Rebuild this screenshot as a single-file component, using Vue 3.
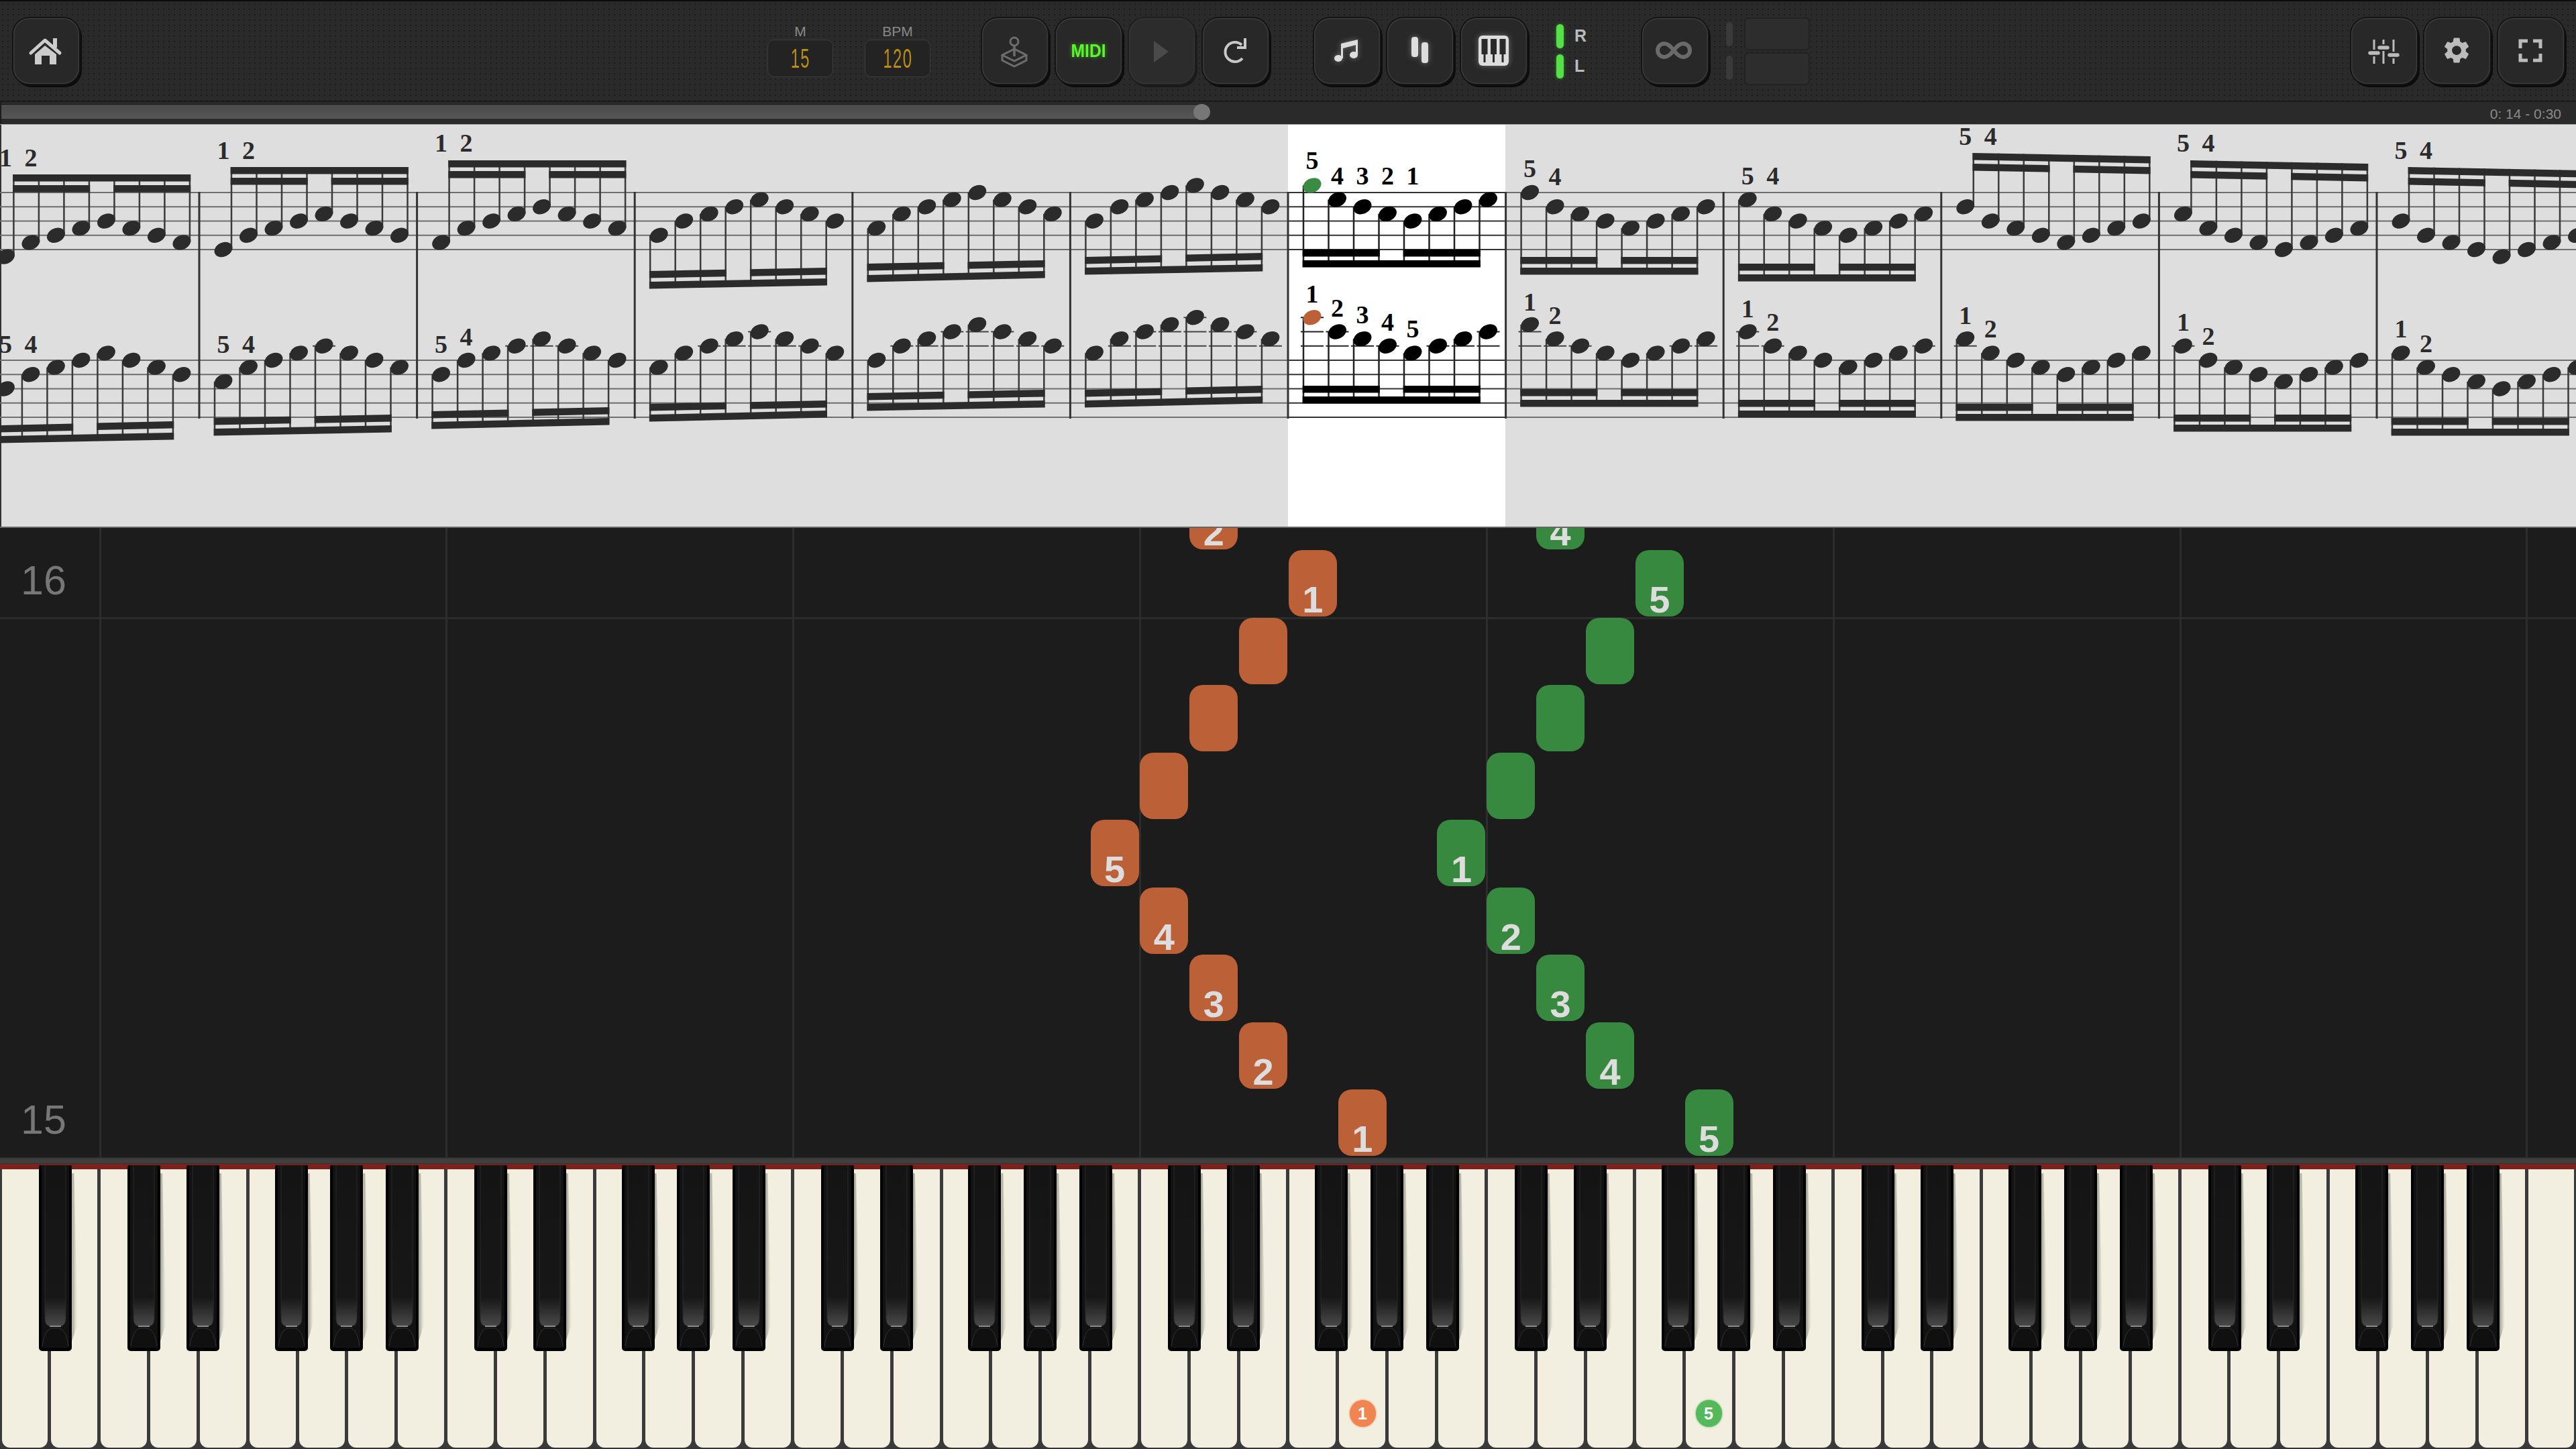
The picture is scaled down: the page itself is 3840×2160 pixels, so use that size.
<template>
  <div class="app">
    <!-- top toolbar -->
    <header class="topbar">
      <button class="btn home">
        <svg class="ico" viewBox="0 0 98 98">
          <rect x="59" y="30" width="6" height="14" fill="#ccc" />
          <path d="M26 52 47 33 69 52" fill="none" stroke="#ccc" stroke-width="5" stroke-linecap="round" stroke-linejoin="round" />
          <path d="M47 41 32 54V69H42V56H54V69H64V54Z" fill="#ccc" />
        </svg>
      </button>

      <div class="readout first">
        <span class="readout-label">M</span>
        <div class="lcd"><span>15</span></div>
      </div>
      <div class="readout second">
        <span class="readout-label">BPM</span>
        <div class="lcd"><span>120</span></div>
      </div>

      <div class="btn-group transport">
        <button class="btn">
          <svg class="ico" viewBox="0 0 98 98" fill="none" stroke="#6d6d6d" stroke-width="3" stroke-linejoin="round">
            <circle cx="48" cy="35" r="6" />
            <path d="M48 41V57" stroke-width="3.5" />
            <path d="M30 55 48 46 66 55 48 64Z" />
            <path d="M30 55V63L48 72 66 63V55" />
          </svg>
        </button>
        <button class="btn"><span class="midi">MIDI</span></button>
        <button class="btn disabled">
          <svg class="ico" viewBox="0 0 98 98"><path d="M37 34 59 50 37 66Z" fill="#4a4a4a" /></svg>
        </button>
        <button class="btn">
          <svg class="ico" viewBox="0 0 98 98" fill="none" stroke="#c8c8c8" stroke-width="4">
            <path d="M58 40A14.5 14.5 0 1 0 59 60" />
            <path d="M63 30V44H51" />
          </svg>
        </button>
      </div>

      <div class="btn-group views">
        <button class="btn">
          <svg class="ico lit" viewBox="0 0 98 98" fill="#ddd">
            <ellipse cx="36" cy="60" rx="6" ry="5" />
            <ellipse cx="59" cy="55" rx="6" ry="5" />
            <path d="M40 60V38L65 32V55H62V40L43 45V60Z" />
          </svg>
        </button>
        <button class="btn">
          <svg class="ico lit" viewBox="0 0 98 98" fill="#ddd">
            <rect x="36" y="28" width="10" height="30" rx="4" />
            <rect x="51" y="36" width="10" height="31" rx="4" />
          </svg>
        </button>
        <button class="btn">
          <svg class="ico lit" viewBox="0 0 98 98">
            <rect x="26" y="26" width="45" height="45" rx="6" fill="#ddd" />
            <path d="M30.5 31H39.500V54H36.500V66H33.500V54H30.500ZM44 31H53V54H50V66H47V54H44ZM57.500 31H66.500V54H63.500V66H60.500V54H57.500Z" fill="#2a2a2a" />
          </svg>
        </button>
      </div>

      <div class="hands">
        <div class="hand"><i class="led"></i><span>R</span></div>
        <div class="hand"><i class="led"></i><span>L</span></div>
      </div>

      <button class="btn loop">
        <svg class="ico" viewBox="0 0 98 98">
          <path d="M47 48C41 40 36 38 33 38A10 10 0 0 0 33 58C36 58 41 56 47 48S58 38 61 38A10 10 0 0 1 61 58C58 58 53 56 47 48Z" fill="none" stroke="#6a6a6a" stroke-width="6" />
        </svg>
      </button>

      <div class="slots"><i></i><i></i></div>
      <div class="loop-fields"><i></i><i></i></div>

      <div class="btn-group right">
        <button class="btn">
          <svg class="ico" viewBox="0 0 98 98" stroke="#bbb" stroke-width="3">
            <path d="M34 32V47M34 57V68M48 32V39M48 49V68M63 32V50M63 60V68" fill="none" />
            <path d="M28 52H40M42 44H54M57 55H69" stroke-width="5.5" stroke-linecap="round" fill="none" />
          </svg>
        </button>
        <button class="btn">
          <svg class="ico" viewBox="0 0 98 98">
            <g transform="translate(25 25)">
              <path transform="scale(1.92)" fill="#bbb" d="M19.14 12.94c.04-.3.06-.61.06-.94 0-.32-.02-.64-.07-.94l2.03-1.58a.49.49 0 0 0 .12-.61l-1.92-3.32a.488.488 0 0 0-.59-.22l-2.39.96c-.5-.38-1.03-.7-1.62-.94l-.36-2.54a.484.484 0 0 0-.48-.41h-3.84c-.24 0-.43.17-.47.41l-.36 2.54c-.59.24-1.13.57-1.62.94l-2.39-.96c-.22-.08-.47 0-.59.22L2.74 8.87c-.12.21-.08.47.12.61l2.03 1.58c-.05.3-.09.63-.09.94s.02.64.07.94l-2.03 1.58a.49.49 0 0 0-.12.61l1.92 3.32c.12.22.37.29.59.22l2.39-.96c.5.38 1.03.7 1.62.94l.36 2.54c.05.24.24.41.48.41h3.84c.24 0 .44-.17.47-.41l.36-2.54c.59-.24 1.13-.56 1.62-.94l2.39.96c.22.08.47 0 .59-.22l1.92-3.32c.12-.22.07-.47-.12-.61l-2.01-1.58zM12 15.6c-1.98 0-3.6-1.62-3.6-3.6s1.62-3.6 3.6-3.6 3.6 1.62 3.6 3.6-1.62 3.6-3.6 3.6z" />
            </g>
          </svg>
        </button>
        <button class="btn">
          <svg class="ico" viewBox="0 0 98 98" fill="none" stroke="#bbb" stroke-width="5">
            <path d="M33 45V34H44M52 34H63V45M63 53V63H52M44 63H33V53" />
          </svg>
        </button>
      </div>
    </header>

    <!-- progress -->
    <div class="progress">
      <div class="progress-fill"><i class="progress-thumb"></i></div>
      <span class="progress-time">0: 14 - 0:30</span>
    </div>

    <!-- score strip -->
    <section class="sheet">
      <svg class="score" width="3840" height="602" viewBox="0 185 3840 602">
        <rect x="1920" y="185" width="324" height="602" fill="#fff" />
        <line v-for="(l, i) in score.lines" :key="'l' + i" :x1="l.x1" :x2="l.x2" :y1="l.y" :y2="l.y" :stroke="l.color" stroke-width="2" />
        <line v-for="(b, i) in score.bars" :key="'b' + i" :x1="b" :x2="b" y1="286" y2="624" stroke="#333" stroke-width="3" />
        <line v-for="(s, i) in score.stems" :key="'s' + i" :x1="s.x" :x2="s.x" :y1="s.y1" :y2="s.y2" :stroke="s.color" stroke-width="2.5" />
        <polygon v-for="(p, i) in score.beams" :key="'p' + i" :points="p.points" :fill="p.color" />
        <ellipse v-for="(h, i) in score.heads" :key="'h' + i" :cx="h.x" :cy="h.y" rx="14" ry="10.5" :fill="h.color" :transform="`rotate(-25 ${h.x} ${h.y})`" />
        <text v-for="(t, i) in score.digits" :key="'t' + i" class="finger" :x="t.x" :y="t.y + 12.5" :fill="t.color">{{ t.n }}</text>
      </svg>
    </section>

    <!-- falling notes -->
    <section class="roll">
      <i v-for="x in gridX" :key="x" class="grid-v" :style="{ left: x + 'px' }"></i>
      <i class="grid-h"></i>
      <span class="bar-no no16">16</span>
      <span class="bar-no no15">15</span>
      <div
        v-for="(n, i) in rollNotes"
        :key="i"
        class="note"
        :class="n.hand"
        :style="{ left: n.left + 'px', top: n.top + 'px' }"
      >{{ n.finger }}</div>
    </section>

    <!-- keyboard -->
    <section class="keyboard">
      <div class="rail"></div>
      <div class="felt"></div>
      <div class="whites">
        <div v-for="k in 52" :key="k" class="white"></div>
      </div>
      <div v-for="(x, i) in blackKeys" :key="i" class="black" :style="{ left: x + 'px' }">
        <svg width="49" height="277" viewBox="0 0 49 277">
          <rect x="4" y="0" width="41" height="272" fill="#121212" />
          <path d="M9 0V228Q9 240 18 240H31Q40 240 40 228V0" fill="url(#keyFace)" stroke="#2b2b2b" stroke-width="1" />
          <path d="M16 240H33" stroke="#8a8a8a" stroke-width="2" />
          <path d="M5 270Q8 246 18 243H31Q41 246 44 270" fill="#101010" stroke="#303030" stroke-width="1" />
        </svg>
      </div>
      <div class="badge orange">1</div>
      <div class="badge green">5</div>
      <svg class="defs" width="0" height="0">
        <defs>
          <linearGradient id="keyFace" x1="0" y1="0" x2="0" y2="1">
            <stop offset="0" stop-color="#141414" />
            <stop offset="0.82" stop-color="#171717" />
            <stop offset="1" stop-color="#4a4a4a" />
          </linearGradient>
        </defs>
      </svg>
    </section>
  </div>
</template>

<script setup>
const KEY = 3840 / 52;
const ROW = 10.625;
const DIM = "#2b2b2b";

// x of measure k = first + k * width, note spacing 37.5
const measureX = (k) => -27.6 + 324.6 * k;

// [first position, beam1 left, beam1 right, beam2 left, beam2 right, up?, digits, digit y's]
const upper = [
  [9, 260, 260, 276, 276, true, "12", [235, 235]],
  [8, 249, 249, 265, 265, true, "12", [224, 224]],
  [7, 239, 239, 255, 255, true, "12", [213, 213]],
  [6, 404, 399, 420, 415, false],
  [5, 393, 388, 410, 404, false],
  [4, 383, 377, 399, 394, false],
  [-1, 372, 372, 388, 388, false, "54321", [239, 262, 262, 262, 262]],
  [0, 383, 383, 399, 399, false, "54", [251, 263]],
  [1, 393, 393, 409, 409, false, "54", [262, 262]],
  [2, 228, 233, 244, 249, true, "54", [203, 203]],
  [3, 239, 244, 255, 260, true, "54", [213, 213]],
  [4, 249, 254, 265, 270, true, "54", [224, 224]],
];
const lower = [
  [4, 634, 628, 650, 645, false, "54", [513, 513]],
  [3, 623, 618, 639, 634, false, "54", [513, 513]],
  [2, 613, 607, 629, 623, false, "54", [513, 502]],
  [1, 602, 597, 618, 612, false],
  [0, 586, 581, 602, 597, false],
  [-1, 581, 575, 597, 591, false],
  [-6, 575, 575, 591, 591, false, "12345", [438, 459, 469, 480, 490]],
  [-5, 580, 580, 596, 596, false, "12", [450, 470]],
  [-4, 596, 596, 612, 612, false, "12", [460, 480]],
  [-3, 602, 602, 617, 617, false, "12", [470, 490]],
  [-2, 618, 618, 633, 633, false, "12", [480, 501]],
  [-1, 623, 623, 639, 639, false, "12", [490, 512]],
];
const RISING = [0, -2, -3, -4, -5, -4, -3, -2];
const FALLING = [0, 2, 3, 4, 5, 4, 3, 2];

function buildScore() {
  const out = { lines: [], bars: [], stems: [], beams: [], heads: [], digits: [] };
  for (let k = 0; k < 12; k++) {
    const x0 = measureX(k);
    const now = k === 6;
    const ink = now ? "#000" : DIM;
    out.bars.push(x0);
    [287, 537].forEach((base) => {
      for (let l = 0; l < 5; l++) {
        out.lines.push({ x1: x0, x2: x0 + 324.6, y: base + l * ROW * 2, color: now ? "#333" : "#6e6e6e" });
      }
    });
    [
      [upper[k], 287, "#3a8c42"],
      [lower[k], 537, "#bc6038"],
    ].forEach(([d, base, nowColor]) => {
      const [p0, l1, r1, l2, r2, up, nums, numY] = d;
      const contour = k < 6 ? RISING : FALLING;
      const stemAt = (i) => x0 + 36 + 37.5 * i + (up ? 12 : -13);
      const xa = stemAt(0);
      const xb = stemAt(7);
      const at = (l, r, x) => l + ((r - l) * (x - xa)) / (xb - xa);
      const beam = (l, r, from, to) => {
        const a = from - 1.3;
        const b = to + 1.3;
        out.beams.push({
          points: `${a},${at(l, r, a)} ${b},${at(l, r, b)} ${b},${at(l, r, b) + 10.5} ${a},${at(l, r, a) + 10.5}`,
          color: ink,
        });
      };
      // outer beam runs the whole group, inner one breaks after the 4th note
      if (up) {
        beam(l1, r1, xa, xb);
        beam(l2, r2, xa, stemAt(3));
        beam(l2, r2, stemAt(4), xb);
      } else {
        beam(l2, r2, xa, xb);
        beam(l1, r1, xa, stemAt(3));
        beam(l1, r1, stemAt(4), xb);
      }
      contour.forEach((c, i) => {
        const x = x0 + 36 + 37.5 * i;
        const p = p0 + c;
        const y = base + p * ROW;
        const sx = stemAt(i);
        out.stems.push({
          x: sx,
          y1: y,
          y2: up ? at(l1, r1, sx) : at(l2, r2, sx) + 10,
          color: now ? "#222" : "#3a3a3a",
        });
        if (base === 537) {
          for (let q = -2; q >= p; q -= 2) {
            out.lines.push({ x1: x - 17, x2: x + 17, y: base + q * ROW, color: now ? "#222" : "#444" });
          }
        }
        out.heads.push({ x, y, color: now && i === 0 ? nowColor : ink });
      });
      if (nums) {
        nums.split("").forEach((n, i) => {
          out.digits.push({ n, x: x0 + 36 + 37.5 * i, y: numY[i], color: ink });
        });
      }
    });
  }
  return out;
}

const score = buildScore();

const gridX = [148, 664, 1181, 1698, 2215, 2732, 3249, 3765];

// row 0 sits on the keys, each row is one sixteenth higher
const rollNotes = [];
const addHand = (hand, keys) => {
  keys.forEach(([idx, finger], row) => {
    rollNotes.push({
      hand,
      finger,
      left: (idx + 0.5) * KEY - 36,
      top: 1624 - 100.5 * row - 787,
    });
  });
};
addHand("left", [
  [27, 1], [25, 2], [24, 3], [23, 4], [22, 5],
  [23, ""], [24, ""], [25, ""], [26, 1], [24, 2],
]);
addHand("right", [
  [34, 5], [32, 4], [31, 3], [30, 2], [29, 1],
  [30, ""], [31, ""], [32, ""], [33, 5], [31, 4],
]);

// white index after which a black key sits, and how far it leans off the crack
const LEAN = { 0: 9, 2: -7, 3: 7, 5: -9, 6: 0 };
const blackKeys = [];
for (let i = 0; i < 51; i++) {
  const lean = LEAN[i % 7];
  if (lean !== undefined) blackKeys.push((i + 1) * KEY + lean - 24.5);
}
</script>

<style>
html,
body {
  margin: 0;
  background: #1c1c1c;
}
</style>

<style scoped>
.app {
  width: 3840px;
  height: 2160px;
  display: flex;
  flex-direction: column;
  overflow: hidden;
  font-family: "Liberation Sans", Arial, sans-serif;
}

/* toolbar */
.topbar {
  height: 152px;
  box-sizing: border-box;
  flex: none;
  display: flex;
  align-items: center;
  padding: 0 18px 0 20px;
  background-color: #2a2a2a;
  background-image: radial-gradient(circle, #1f1f1f 1px, transparent 1.4px);
  background-size: 8px 8px;
  border-top: 2px solid #0c0c0c;
  border-bottom: 2px solid #1c1c1c;
}

.btn {
  position: relative;
  flex: none;
  width: 98px;
  height: 98px;
  padding: 0;
  border: none;
  border-radius: 24px;
  background: #282828;
  box-shadow: inset 0 0 0 1.5px #3a3a3a, 0 0 0 2px #141414, 3px 4px 0 1px #0c0c0c;
  display: flex;
  align-items: center;
  justify-content: center;
}

.btn.disabled {
  background: #2c2c2c;
  box-shadow: inset 0 0 0 1.5px #353535, 0 0 0 2px #1e1e1e, 3px 4px 0 1px #1b1b1b;
}

.ico {
  display: block;
  width: 98px;
  height: 98px;
}

.ico.lit {
  filter: drop-shadow(0 0 4px rgba(255, 255, 255, 0.35));
}

.midi {
  font-weight: 700;
  font-size: 28px;
  line-height: 28px;
  color: #5df52f;
  transform: scaleX(0.88);
  text-shadow: 0 0 7px #3c9b22;
}

.btn-group {
  display: flex;
  gap: 11.6px;
}

.readout {
  flex: none;
  width: 98px;
  display: flex;
  flex-direction: column;
  align-items: center;
  gap: 4px;
}

.readout.first {
  margin-left: 1026px;
}

.readout.second {
  margin-left: 47px;
}

.readout-label {
  font-size: 21px;
  line-height: 17px;
  color: #888;
}

.lcd {
  width: 100%;
  height: 56px;
  box-sizing: border-box;
  border: 1px solid #3c3c3c;
  border-radius: 10px;
  background: #232323;
  display: flex;
  align-items: center;
  justify-content: center;
}

.lcd span {
  font-size: 40px;
  line-height: 40px;
  letter-spacing: 2px;
  color: #b98d12;
  transform: scaleX(0.6);
}

.transport {
  margin-left: 77px;
}

.views {
  margin-left: 68px;
}

.hands {
  flex: none;
  margin-left: 44px;
  display: flex;
  flex-direction: column;
  gap: 9px;
}

.hand {
  display: flex;
  align-items: center;
  gap: 16px;
  font-size: 25px;
  font-weight: 700;
  color: #bbb;
}

.led {
  display: block;
  width: 11px;
  height: 36px;
  border-radius: 6px;
  background: #55e04a;
  box-shadow: 0 0 5px #2f8f28;
}

.loop {
  margin-left: 83px;
}

.slots {
  flex: none;
  margin-left: 27px;
  display: flex;
  flex-direction: column;
  gap: 14px;
}

.slots i {
  display: block;
  width: 10px;
  height: 36px;
  border-radius: 5px;
  background: #3a3a3a;
}

.loop-fields {
  flex: none;
  margin-left: 17px;
  display: flex;
  flex-direction: column;
  gap: 3px;
}

.loop-fields i {
  display: block;
  width: 98px;
  height: 49px;
  box-sizing: border-box;
  border: 2px solid #222;
  border-radius: 6px;
  background: #2d2d2d;
}

.right {
  margin-left: auto;
}

/* progress */
.progress {
  position: relative;
  flex: none;
  height: 33px;
  box-sizing: border-box;
  padding-top: 5px;
  background: #2a2a2a;
  border-left: 2px solid #1c1c1c;
}

.progress-fill {
  position: relative;
  width: 1790px;
  height: 20px;
  background: linear-gradient(#4b4b4b, #565656);
  border-top: 1px solid #5e5e5e;
  box-sizing: border-box;
}

.progress-thumb {
  position: absolute;
  left: 1777px;
  top: -3px;
  width: 25px;
  height: 24px;
  border-radius: 50%;
  background: #777;
}

.progress-time {
  position: absolute;
  right: 22px;
  top: 7px;
  font-size: 21px;
  line-height: 21px;
  color: #8a8a8a;
}

/* score */
.sheet {
  flex: none;
  height: 602px;
  overflow: hidden;
  background: #dedede;
  border-top: 1px solid #a8a8a8;
  border-bottom: 2px solid #666;
  box-sizing: border-box;
  box-shadow: inset 2px 0 #333;
}

.score {
  display: block;
  margin-top: -1px;
}

.finger {
  font-family: "Liberation Serif", "Times New Roman", serif;
  font-weight: 700;
  font-size: 38px;
  text-anchor: middle;
}

/* roll */
.roll {
  position: relative;
  flex: none;
  height: 938px;
  overflow: hidden;
  background: #1c1c1c;
}

.grid-v {
  position: absolute;
  top: 0;
  bottom: 0;
  width: 3px;
  background: #2d2d2d;
}

.grid-h {
  position: absolute;
  left: 0;
  right: 0;
  top: 133px;
  height: 3px;
  background: #2d2d2d;
}

.bar-no {
  position: absolute;
  left: 31px;
  font-size: 61px;
  line-height: 61px;
  color: #777;
}

.no16 {
  top: 48px;
}

.no15 {
  top: 852px;
}

.note {
  position: absolute;
  width: 72px;
  height: 99px;
  box-sizing: border-box;
  padding-bottom: 3px;
  border-radius: 20px;
  display: flex;
  align-items: flex-end;
  justify-content: center;
  font-size: 56px;
  font-weight: 700;
  line-height: 44px;
  color: #ddd;
}

.note.left {
  background: #bc6038;
}

.note.right {
  background: #37893f;
}

/* keyboard */
.keyboard {
  position: relative;
  flex: none;
  height: 435px;
  background: #343434;
  border-top: 1px solid #2a2a2a;
  box-sizing: border-box;
}

.rail {
  height: 7px;
  margin-top: 1px;
  background: #3e3e3e;
}

.felt {
  height: 8px;
  margin-top: 1px;
  background: #7c211c;
}

.whites {
  display: flex;
  height: 415px;
  background: #3a3a3a;
}

.white {
  flex: 1;
  margin: 0 2.5px;
  border-radius: 0 0 12px 12px;
  background: #f2efe0;
}

.black {
  position: absolute;
  top: 11px;
  width: 49px;
  height: 277px;
  border-radius: 2px 2px 5px 5px;
  background: #020202;
}

.black svg {
  display: block;
}

.black::after {
  content: "";
  position: absolute;
  left: 49px;
  top: 12px;
  width: 8px;
  height: 250px;
  background: linear-gradient(90deg, #9d9c91, #d8d6c8 60%, #f2efe0);
  clip-path: polygon(0 0, 40% 0, 100% 86%, 100% 90%, 0 100%);
}

.badge {
  position: absolute;
  top: 361px;
  width: 39px;
  height: 40px;
  border-radius: 50%;
  display: flex;
  align-items: center;
  justify-content: center;
  font-size: 25px;
  font-weight: 700;
  color: #fff;
}

.badge.orange {
  left: 2011.5px;
  background: #f08552;
  box-shadow: 0 0 3px #f08552;
}

.badge.green {
  left: 2527.5px;
  background: #55b85b;
  box-shadow: 0 0 3px #55b85b;
}

.defs {
  position: absolute;
}
</style>
